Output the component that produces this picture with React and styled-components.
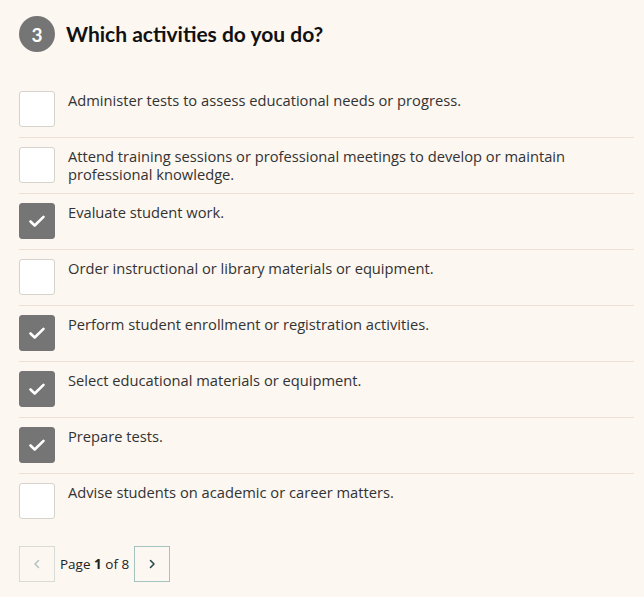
import React, { useState } from "react";
import styled, { createGlobalStyle } from "styled-components";

const GlobalStyle = createGlobalStyle`
  html, body {
    margin: 0;
    background: #fcf7f1;
  }
  body {
    font-family: "Open Sans", "Noto Sans", sans-serif;
    color: #333;
  }
`;

const Page = styled.div`
  padding: 16px 10px 15px 19px;
`;

const Header = styled.div`
  display: flex;
  align-items: center;
  gap: 11px;
  margin-bottom: 30px;
`;

const StepBadge = styled.div`
  width: 36px;
  height: 36px;
  border-radius: 50%;
  background: #757575;
  color: #fff;
  display: flex;
  align-items: center;
  justify-content: center;
  font: 700 19px/1 "Lato", sans-serif;
`;

const Title = styled.h2`
  margin: 0;
  font: 700 21px/1.2 "Lato", sans-serif;
  color: #111;
`;

const List = styled.ul`
  list-style: none;
  margin: 0;
  padding: 0;
`;

const Row = styled.li`
  display: flex;
  align-items: flex-start;
  gap: 13px;
  padding: 9px 0 10px;
  border-bottom: 1px solid #ebe0d3;
  cursor: pointer;

  &:last-child {
    border-bottom: none;
  }
`;

const Box = styled.span`
  flex: none;
  width: 36px;
  height: 36px;
  box-sizing: border-box;
  border-radius: 3px;
  border: 1px solid ${(p) => (p.$checked ? "#757575" : "#d6d2cc")};
  background: ${(p) => (p.$checked ? "#757575" : "#fff")};
  display: flex;
  align-items: center;
  justify-content: center;
`;

const Label = styled.span`
  font-size: 14.7px;
  line-height: 18px;
  color: #333;
`;

const Pager = styled.div`
  display: flex;
  align-items: center;
  gap: 5px;
  margin-top: 17px;
  font-size: 13.5px;
  color: #222;
`;

const PageButton = styled.button`
  width: 36px;
  height: 36px;
  padding: 0;
  background: transparent;
  border: 1px solid ${(p) => (p.disabled ? "#d7dcd9" : "#a4c3c1")};
  color: ${(p) => (p.disabled ? "#b9c2c0" : "#2a4a50")};
  display: flex;
  align-items: center;
  justify-content: center;
  cursor: ${(p) => (p.disabled ? "default" : "pointer")};
`;

const Check = () => (
  <svg width="18" height="16" viewBox="0 0 18 16" fill="none">
    <path d="M2.5 8.5l4.2 4L15.5 3.8" stroke="#fff" strokeWidth="2.6" strokeLinecap="round" strokeLinejoin="round" />
  </svg>
);

const Chevron = ({ dir }) => (
  <svg width="10" height="10" viewBox="0 0 10 10" fill="none">
    <path
      d={dir === "left" ? "M6.5 1.5L3 5l3.5 3.5" : "M3.5 1.5L7 5 3.5 8.5"}
      stroke="currentColor"
      strokeWidth="1.6"
      strokeLinecap="round"
      strokeLinejoin="round"
    />
  </svg>
);

const activities = [
  { text: "Administer tests to assess educational needs or progress.", checked: false },
  { text: "Attend training sessions or professional meetings to develop or maintain professional knowledge.", checked: false },
  { text: "Evaluate student work.", checked: true },
  { text: "Order instructional or library materials or equipment.", checked: false },
  { text: "Perform student enrollment or registration activities.", checked: true },
  { text: "Select educational materials or equipment.", checked: true },
  { text: "Prepare tests.", checked: true },
  { text: "Advise students on academic or career matters.", checked: false },
];

const App = () => {
  const [items, setItems] = useState(activities);

  const toggle = (i) => {
    setItems((prev) => prev.map((it, j) => (j === i ? { ...it, checked: !it.checked } : it)));
  };

  return (
    <>
      <GlobalStyle />
      <Page>
        <Header>
          <StepBadge>3</StepBadge>
          <Title>Which activities do you do?</Title>
        </Header>
        <List>
          {items.map((it, i) => (
            <Row key={i} onClick={() => toggle(i)}>
              <Box $checked={it.checked}>{it.checked && <Check />}</Box>
              <Label>{it.text}</Label>
            </Row>
          ))}
        </List>
        <Pager>
          <PageButton disabled>
            <Chevron dir="left" />
          </PageButton>
          <span>
            Page <b>1</b> of 8
          </span>
          <PageButton>
            <Chevron dir="right" />
          </PageButton>
        </Pager>
      </Page>
    </>
  );
};

export default App;
